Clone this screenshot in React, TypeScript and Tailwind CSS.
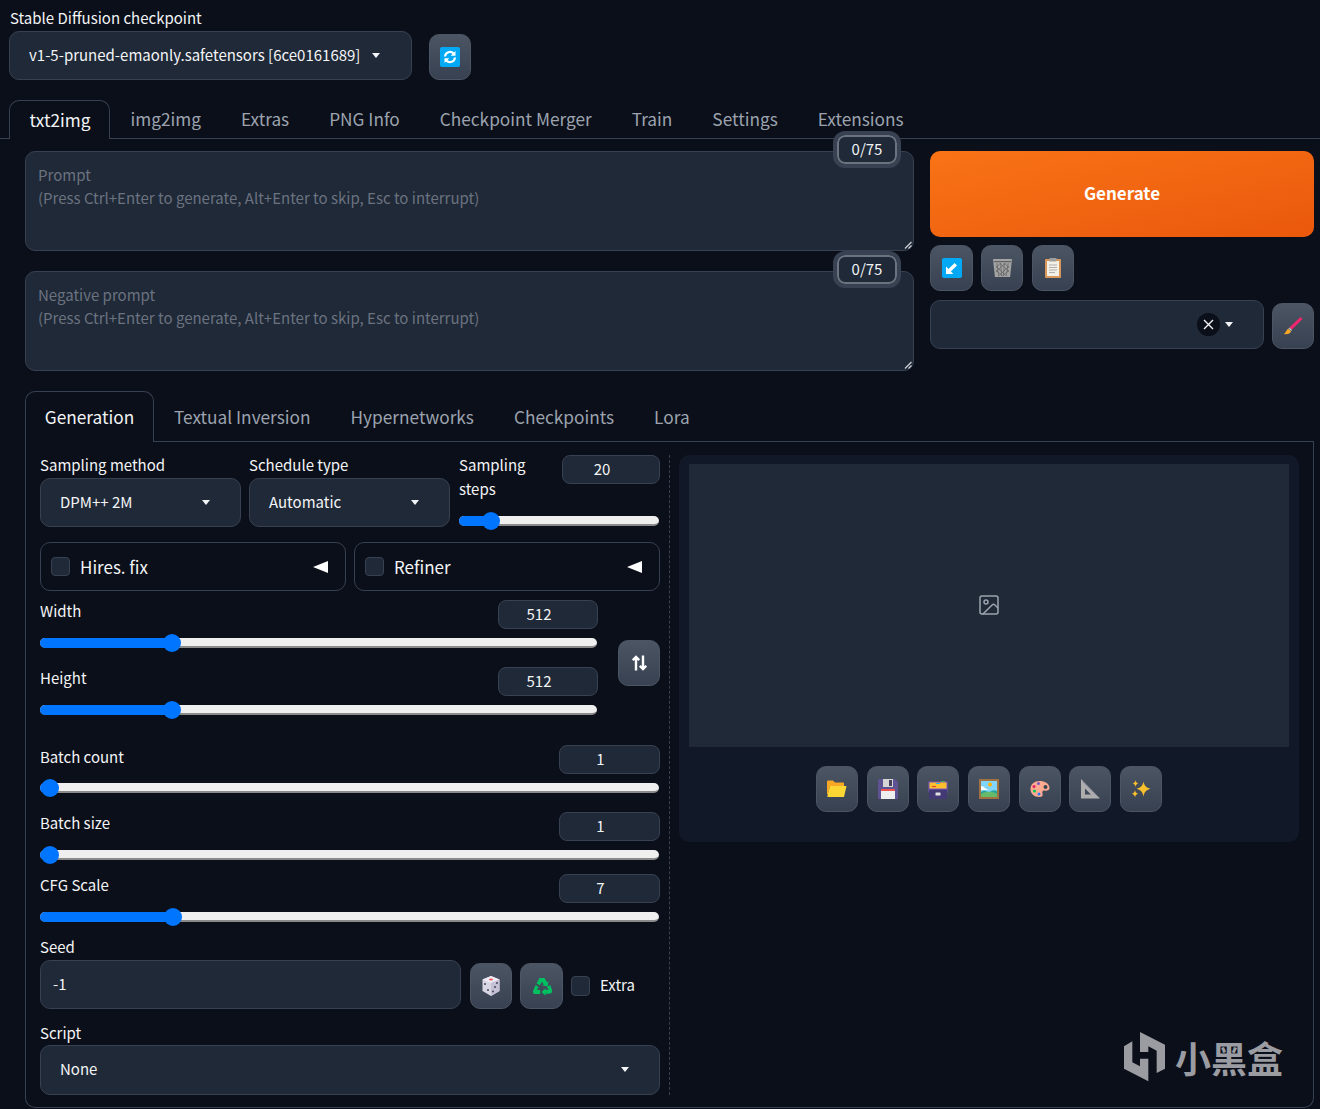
import { ImageIcon } from "lucide-react";
import type { ReactNode } from "react";

const mainTabs = ["img2img", "Extras", "PNG Info", "Checkpoint Merger", "Train", "Settings", "Extensions"];
const subTabs = ["Textual Inversion", "Hypernetworks", "Checkpoints", "Lora"];

const RefreshIcon = () => (
  <svg width="20" height="20" viewBox="0 0 20 20">
    <rect width="20" height="20" rx="2" fill="#03a9f4" />
    <path d="M5 9.500a5 5 0 0 1 8.600-3" fill="none" stroke="#fff" strokeWidth="2.200" />
    <path d="M15.500 4v4.800h-4.800z" fill="#fff" />
    <path d="M15 10.500a5 5 0 0 1-8.600 3" fill="none" stroke="#fff" strokeWidth="2.200" />
    <path d="M4.500 16v-4.800h4.800z" fill="#fff" />
  </svg>
);
const ArrowIcon = () => (
  <svg width="20" height="20" viewBox="0 0 20 20">
    <rect width="20" height="20" rx="2" fill="#03a9f4" />
    <path d="M4 16V8.600l2.500 2.500L12.600 5 15 7.400 8.900 13.500 11.400 16z" fill="#fff" />
  </svg>
);
const TrashIcon = () => (
  <svg width="19" height="20" viewBox="0 0 20 20" preserveAspectRatio="none">
    <path d="M0 1h20l-2 18H2z" fill="#a3a3a3" />
    <path d="M1 3h18v1.200H1z" fill="#616161" />
    <path d="M4 5l2 13M8 5l1 13M12 5l-1 13M16 5l-2 13M3 8l11 10M3 12l7 6M7 5l10 9M12 5l5 5M17 8L6 18M17 12l-7 6M13 5L3 14M8 5L3 10" stroke="#616161" strokeWidth=".7" fill="none" />
  </svg>
);
const ClipboardIcon = () => (
  <svg width="16" height="20" viewBox="0 0 16 20">
    <rect x="0" y="1" width="16" height="19" rx="1" fill="#d9975a" />
    <rect x="2" y="3" width="12" height="15" fill="#f5f0e6" />
    <rect x="4.500" y="0" width="7" height="3.500" rx=".5" fill="#9e9e9e" />
    <path d="M4 7h8M4 9.500h8M4 12h8M4 14.500h6" stroke="#b0b0b0" strokeWidth="1" />
  </svg>
);
const BrushIcon = () => (
  <svg width="20" height="20" viewBox="0 0 20 20">
    <path d="M17.500 1l2 2L9 13.500l-2.500-2.300z" fill="#f0276e" />
    <path d="M6.500 11.500l2.600 2.400-.9 1.200-2.800-2.500z" fill="#bdbdbd" />
    <path d="M5.200 12.800l2.900 2.600C7 18 3 18.500 1 18c1.800-1 2-3.800 4.200-5.200z" fill="#f9a825" />
  </svg>
);
const FolderIcon = () => (
  <svg width="20" height="20" viewBox="0 0 20 20">
    <path d="M0 2.500a1 1 0 0 1 1-1h5l2 2h8a1 1 0 0 1 1 1V7H3L1 15H0z" fill="#f9a825" />
    <path d="M3 7h16.500L17 18H1.500c-.8 0-1.300-.6-1.100-1.300z" fill="#fdd835" />
  </svg>
);
const FloppyIcon = () => (
  <svg width="20" height="20" viewBox="0 0 20 20">
    <path d="M1 0h16l3 3v17H0V1z" fill="#5e5292" />
    <rect x="5" y="0" width="10" height="8" fill="#d6d6d6" />
    <rect x="11" y="1" width="3" height="6" fill="#45405e" />
    <rect x="3" y="11" width="14" height="9" fill="#eeeeee" />
    <rect x="3" y="10" width="14" height="2" fill="#ef5350" />
  </svg>
);
const CardBoxIcon = () => (
  <svg width="20" height="20" viewBox="0 0 20 20">
    <rect x="1" y="3" width="18" height="10" fill="#fbc02d" stroke="#7e57c2" strokeWidth="1" />
    <path d="M13 2h4v1h-4z" fill="#4caf50" />
    <path d="M4 7h4v1H4z" fill="#e53935" />
    <path d="M8 4h4v1H8z" fill="#29b6f6" />
    <rect x="1" y="10" width="18" height="10" fill="#433a75" />
    <rect x="7.500" y="13.500" width="5" height="3" rx=".5" fill="#e0e0e0" />
    <path d="M1 10h18" stroke="#7e57c2" />
  </svg>
);
const PictureIcon = () => (
  <svg width="20" height="20" viewBox="0 0 20 20">
    <rect width="20" height="20" fill="#a1713f" />
    <rect x="2" y="2" width="16" height="16" fill="#81d4fa" />
    <circle cx="11" cy="5.500" r="2" fill="#ffb300" />
    <path d="M2 7c3 0 4 3 8 4H2z" fill="#fff" />
    <path d="M2 13c4-3 6 0 8 0s4-3 8-1v3H2z" fill="#26a69a" />
    <path d="M2 18v-3c5-3 11-3 16 0v3z" fill="#66bb6a" />
  </svg>
);
const PaletteIcon = () => (
  <svg width="20" height="20" viewBox="0 0 20 20">
    <path d="M9.500 2c5 0 10 2.500 10 7 0 2.500-3 3-5 2.500-2.200-.5-2.500 2-2 3 .8 2-.5 3.500-3 3.500C4 18 .5 14.500.5 10 .5 5 4.500 2 9.500 2z" fill="#ffab91" />
    <circle cx="15.500" cy="8" r="2" fill="#37474f" />
    <circle cx="8.500" cy="4.500" r="1.500" fill="#7e57c2" />
    <circle cx="4" cy="7.500" r="1.500" fill="#e91e63" />
    <circle cx="4.500" cy="12" r="1.500" fill="#00c853" />
    <circle cx="9" cy="15" r="1.500" fill="#2979ff" />
  </svg>
);
const RulerIcon = () => (
  <svg width="20" height="20" viewBox="0 0 20 20">
    <path fillRule="evenodd" d="M1 0l19 19.500H1zM5 9.500v6h6z" fill="#adadad" />
    <path d="M3 3l14 14.500" stroke="#7e6fb0" strokeWidth="1" strokeDasharray="1 1.500" />
  </svg>
);
const SparkleIcon = () => (
  <svg width="20" height="20" viewBox="0 0 20 20">
    <path d="M12.500 2.500c.8 4 2.500 6 7 7.300-4.500 1.300-6.200 3.300-7 7.700-.8-4.400-2.500-6.400-7-7.700 4.500-1.300 6.200-3.300 7-7.300z" fill="#fbc02d" />
    <path d="M4.500 1c.3 2 1 2.800 2.700 3.500C5.500 5 4.800 6 4.500 8 4.200 6 3.500 5 1.800 4.500 3.500 3.800 4.200 3 4.500 1z" fill="#fbc02d" />
    <path d="M4 11c.4 2.200 1.200 3 3.200 3.700-2 .6-2.800 1.500-3.200 3.800-.4-2.300-1.200-3.200-3.200-3.800 2-.7 2.800-1.500 3.200-3.700z" fill="#fbc02d" />
  </svg>
);
const DiceIcon = () => (
  <svg width="20" height="20" viewBox="0 0 20 20">
    <path d="M10 0l8.500 3.500V15L10 20l-8.500-5V3.500z" fill="#d9d6e3" />
    <path d="M10 0l8.500 3.500L10 7 1.500 3.500z" fill="#eeeaf5" />
    <path d="M10 7l8.500-3.500V15L10 20z" fill="#c5c1d4" />
    <ellipse cx="10" cy="3.500" rx="2" ry="1" fill="#ef5350" />
    <circle cx="4" cy="8" r="1" fill="#4a4560" />
    <circle cx="7" cy="14" r="1" fill="#4a4560" />
    <circle cx="16" cy="7" r="1" fill="#4a4560" />
    <circle cx="14" cy="11" r="1" fill="#4a4560" />
    <circle cx="12" cy="15.500" r="1" fill="#4a4560" />
  </svg>
);
const RecycleIcon = () => (
  <svg width="20" height="19" viewBox="0 0 20 20" preserveAspectRatio="none">
    <path d="M7.500 1h5l2.500 4.500 1.500-1-1 5.500-5.500-1.200 1.700-1L10 5 7.800 8.800 4.500 6.800z" fill="#00c060" />
    <path d="M3.500 8.500l3.200 2-1.800 3 3.300.1V18H3c-1.500 0-2.500-1.500-2-3z" fill="#00c060" />
    <path d="M13.500 13.500h3.200l-1.800-3.200 3.300-2L20 13.500c.5 1.800-.5 4-2.500 4h-4v2.300l-4-4 4-4z" fill="#00c060" />
  </svg>
);

function Caret({ className = "" }: { className?: string }) {
  return (
    <span
      className={`inline-block w-0 h-0 border-x-[4.500px] border-x-transparent border-t-[5px] border-t-[#f3f4f6] ${className}`}
    />
  );
}

function IconButton({ children, className = "" }: { children: ReactNode; className?: string }) {
  return (
    <div
      className={`w-[42px] h-[46px] flex items-center justify-center shrink-0 rounded-[10px] border border-[#4b5563] bg-gradient-to-b from-[#4b5563] to-[#374151] ${className}`}
    >
      {children}
    </div>
  );
}

function Select({ value, className = "", caretClass = "" }: { value: string; className?: string; caretClass?: string }) {
  return (
    <div
      className={`h-[49px] flex items-center justify-between pl-[19px] rounded-[10px] border border-[#374151] bg-[#1f2937] text-[#f3f4f6] ${className}`}
    >
      <span>{value}</span>
      <Caret className={caretClass} />
    </div>
  );
}

function NumberBox({ value, className = "" }: { value: string; className?: string }) {
  return (
    <div
      className={`h-[29px] flex items-center justify-center pr-[18px] rounded-lg border border-[#374151] bg-[#1f2937] text-[#f3f4f6] ${className}`}
    >
      <span>{value}</span>
    </div>
  );
}

function Slider({ percent, className = "" }: { percent: number; className?: string }) {
  return (
    <div className={`relative h-[10px] rounded-full bg-[#efefef] border-b-2 border-[#8a8a8a] ${className}`}>
      <div className="h-[10px] rounded-l-full bg-[#0075ff]" style={{ width: `${percent}%` }} />
      <div
        className="absolute top-[-4px] w-[18px] h-[18px] -ml-[9px] rounded-full bg-[#0075ff]"
        style={{ left: `${percent}%` }}
      />
    </div>
  );
}

function SliderRow({ label, value, percent, className = "", labelClass = "-translate-y-[2px]" }: { label: string; value: string; percent: number; className?: string; labelClass?: string }) {
  return (
    <div className={className}>
      <div className="flex justify-between items-center h-[29px]">
        <span className={labelClass}>{label}</span>
        <NumberBox value={value} className="w-[101px]" />
      </div>
      <Slider percent={percent} className="mt-[9px] w-[619px]" />
    </div>
  );
}

function PromptBox({ title, className = "" }: { title: string; className?: string }) {
  return (
    <div
      className={`relative h-[100px] w-[889px] rounded-[10px] border border-[#374151] bg-[#1f2937] px-3 py-[10px] text-[#6b7280] leading-[24px] ${className}`}
    >
      <div className="translate-y-px">{title}</div>
      <div>(Press Ctrl+Enter to generate, Alt+Enter to skip, Esc to interrupt)</div>
      <div className="absolute -top-[17px] right-[16px] w-[60px] h-[29px] flex items-center justify-center rounded-lg border-2 border-[#6b7280] bg-[#1f2937] text-[#f3f4f6] outline-4 outline-[#374151]">
        <span className="-translate-y-px">0/75</span>
      </div>
      <svg className="absolute right-[1px] bottom-[1px]" width="8" height="8" viewBox="0 0 8 8">
        <path d="M7.500 1L1 7.500M7.500 4.500l-3 3" stroke="#d1d5db" strokeWidth="1.200" />
      </svg>
    </div>
  );
}

function Accordion({ label, className = "" }: { label: string; className?: string }) {
  return (
    <div className={`h-[49px] flex-1 flex items-center rounded-[10px] border border-[#374151] pl-[10px] pr-[17px] ${className}`}>
      <span className="w-[19px] h-[19px] rounded-[4px] border border-[#374151] bg-[#1f2937]" />
      <span className="ml-[10px] text-[17px]">{label}</span>
      <span className="ml-auto w-0 h-0 border-y-[6px] border-y-transparent border-r-[15px] border-r-white" />
    </div>
  );
}

export default function App() {
  return (
    <div className="relative w-[1320px] h-[1109px] overflow-hidden bg-[#0b0f19] text-[#f3f4f6] text-[15px] font-['Noto_Sans_CJK_SC',sans-serif]">
      <div className="pl-[10px] pt-[6px] leading-[24px]">Stable Diffusion checkpoint</div>
      <div className="flex items-end mt-[1px] ml-[9px]">
        <Select value="v1-5-pruned-emaonly.safetensors [6ce0161689]" className="w-[403px] !justify-start gap-[12px]" />
        <IconButton className="ml-[17px]">
          <RefreshIcon />
        </IconButton>
      </div>

      <div className="flex mt-[20px] pl-[9px] h-[39px] border-b border-[#374151] text-[17.250px] text-[#9ca3af]">
        <div className="h-[39px] w-[101px] justify-center pb-px pl-px flex items-center rounded-t-[10px] border border-b-0 border-[#374151] bg-[#0b0f19] text-[#f3f4f6]">
          txt2img
        </div>
        {mainTabs.map((t) => (
          <div key={t} className="px-5 flex items-center h-[38px] translate-x-[0.500px]">
            {t}
          </div>
        ))}
      </div>

      <div className="flex pl-[25px] pr-[6px] mt-[12px] gap-4">
        <div className="flex flex-col gap-5">
          <PromptBox title="Prompt" />
          <PromptBox title="Negative prompt" />
        </div>
        <div className="w-[384px]">
          <div className="h-[86px] flex items-center justify-center rounded-[10px] bg-gradient-to-br from-[#f97316] to-[#ea580c] font-bold text-[#ffffff] text-[17px]">
            <span className="-translate-y-px">Generate</span>
          </div>
          <div className="flex gap-2 mt-2">
            <IconButton className="w-[43px]">
              <ArrowIcon />
            </IconButton>
            <IconButton>
              <TrashIcon />
            </IconButton>
            <IconButton className="ml-[1px]">
              <ClipboardIcon />
            </IconButton>
          </div>
          <div className="flex items-end gap-2 mt-[9px]">
            <div className="w-[334px] h-[49px] flex items-center justify-end pr-[30px] rounded-[10px] border border-[#374151] bg-[#1f2937]">
              <span className="w-[23px] h-[23px] mr-[5px] flex items-center justify-center rounded-full bg-[#0b0f19]">
                <svg width="11" height="11" viewBox="0 0 11 11">
                  <path d="M1 1l9 9M10 1l-9 9" stroke="#f3f4f6" strokeWidth="1.400" />
                </svg>
              </span>
              <Caret />
            </div>
            <IconButton>
              <BrushIcon />
            </IconButton>
          </div>
        </div>
      </div>

      <div className="ml-[25px] mr-[6px] mt-[20px] h-[716px] rounded-b-[10px]">
        <div className="flex h-[51px] text-[17.250px] text-[#9ca3af] border-b border-[#374151]">
          <div className="h-[51px] w-[129px] justify-center flex items-center rounded-t-[10px] border border-b-0 border-[#374151] bg-[#0b0f19] text-[#f3f4f6]">
            Generation
          </div>
          {subTabs.map((t) => (
            <div key={t} className="px-5 flex items-center h-[51px]">
              {t}
            </div>
          ))}
        </div>
        <div className="h-[666px] flex border border-t-0 border-[#374151] rounded-b-[10px] pl-[14px] pr-[14px] pt-[13px]">
          <div className="w-[620px] shrink-0">
            <div className="flex gap-2">
              <div className="w-[201px]">
                <div className="h-[24px] leading-[24px] -mt-[2px] mb-[1px]">Sampling method</div>
                <Select value="DPM++ 2M" className="w-[201px] pr-[30px]" />
              </div>
              <div className="w-[201px]">
                <div className="h-[24px] leading-[24px] -mt-[2px] mb-[1px]">Schedule type</div>
                <Select value="Automatic" className="w-[201px] pr-[30px]" />
              </div>
              <div className="ml-[1px] w-[201px]">
                <div className="flex justify-between h-[48px]">
                  <div className="w-[90px] leading-[24px] -mt-[2px]">Sampling steps</div>
                  <NumberBox value="20" className="w-[98px]" />
                </div>
                <Slider percent={16} className="mt-[13px] w-[200px]" />
              </div>
            </div>

            <div className="flex gap-2 mt-[15px]">
              <Accordion label="Hires. fix" />
              <Accordion label="Refiner" />
            </div>

            <div className="flex mt-[9px]">
              <div className="w-[558px]">
                <div className="flex justify-between items-center h-[29px]">
                  <span className="-translate-y-[3px]">Width</span>
                  <NumberBox value="512" className="w-[100px]" />
                </div>
                <Slider percent={23.700} className="mt-[9px] w-[557px]" />
                <div className="flex justify-between items-center h-[29px] mt-[19px]">
                  <span className="-translate-y-[3px]">Height</span>
                  <NumberBox value="512" className="w-[100px]" />
                </div>
                <Slider percent={23.700} className="mt-[9px] w-[557px]" />
              </div>
              <IconButton className="ml-[20px] mt-[40px] text-white">
                <svg width="15" height="16" viewBox="0 0 15 16" fill="none" stroke="#fff" strokeWidth="2.400">
                  <path d="M4 15.500V2M.8 5.200L4 2l3.200 3.200M11 .5V14M7.800 10.800L11 14l3.200-3.200" />
                </svg>
              </IconButton>
            </div>

            <SliderRow label="Batch count" value="1" percent={1.600} className="mt-[30px]" />
            <SliderRow label="Batch size" value="1" percent={1.600} className="mt-[19px]" labelClass="-translate-y-[3px]" />
            <SliderRow label="CFG Scale" value="7" percent={21.500} className="mt-[14px]" labelClass="-translate-y-[3px]" />

            <div className="mt-[13px] leading-[24px]">Seed</div>
            <div className="flex items-end gap-2 mt-[1px]">
              <div className="w-[421px] h-[49px] flex items-center pl-3 rounded-[10px] border border-[#374151] bg-[#1f2937]">
                <span>-1</span>
              </div>
              <IconButton className="ml-[1px]">
                <DiceIcon />
              </IconButton>
              <IconButton className="w-[43px]">
                <RecycleIcon />
              </IconButton>
              <div className="flex items-center self-center ml-0 mt-[2px]">
                <span className="w-[19px] h-[20px] rounded-[4px] border border-[#374151] bg-[#1f2937]" />
                <span className="ml-[10px]">Extra</span>
              </div>
            </div>

            <div className="mt-[12px] leading-[24px]">Script</div>
            <Select value="None" className="h-[50px] pr-[30px] pb-px" />
          </div>

          <div className="w-[1px] h-[640px] ml-[9px] shrink-0 border-l border-dashed border-[#374151]" />

          <div className="ml-[9px] w-[620px] h-[387px] rounded-[10px] bg-[#111827] p-[10px] pt-[9px] shrink-0">
            <div className="h-[283px] flex items-center justify-center bg-[#1f2937]">
              <ImageIcon size={24} strokeWidth={1.500} className="text-[#9ca3af] -translate-y-px" />
            </div>
            <div className="flex justify-center gap-[8.670px] mt-[19px]">
              <IconButton>
                <FolderIcon />
              </IconButton>
              <IconButton>
                <FloppyIcon />
              </IconButton>
              <IconButton>
                <CardBoxIcon />
              </IconButton>
              <IconButton>
                <PictureIcon />
              </IconButton>
              <IconButton>
                <PaletteIcon />
              </IconButton>
              <IconButton>
                <RulerIcon />
              </IconButton>
              <IconButton>
                <SparkleIcon />
              </IconButton>
            </div>
          </div>
        </div>
      </div>

      <div className="absolute left-[1120px] top-[1028px] flex items-center text-[#9b9ca1]">
        <svg width="55" height="58" viewBox="0 0 165 174" fill="#9b9ca1">
          <path d="M12 55L37 40V103L60 115V92H85V160L12 122Z" />
          <path d="M60 12L135 50V122L110 135V68L85 55V72H60Z" />
        </svg>
        <span className="text-[36px] leading-none font-bold">小黑盒</span>
      </div>
    </div>
  );
}
